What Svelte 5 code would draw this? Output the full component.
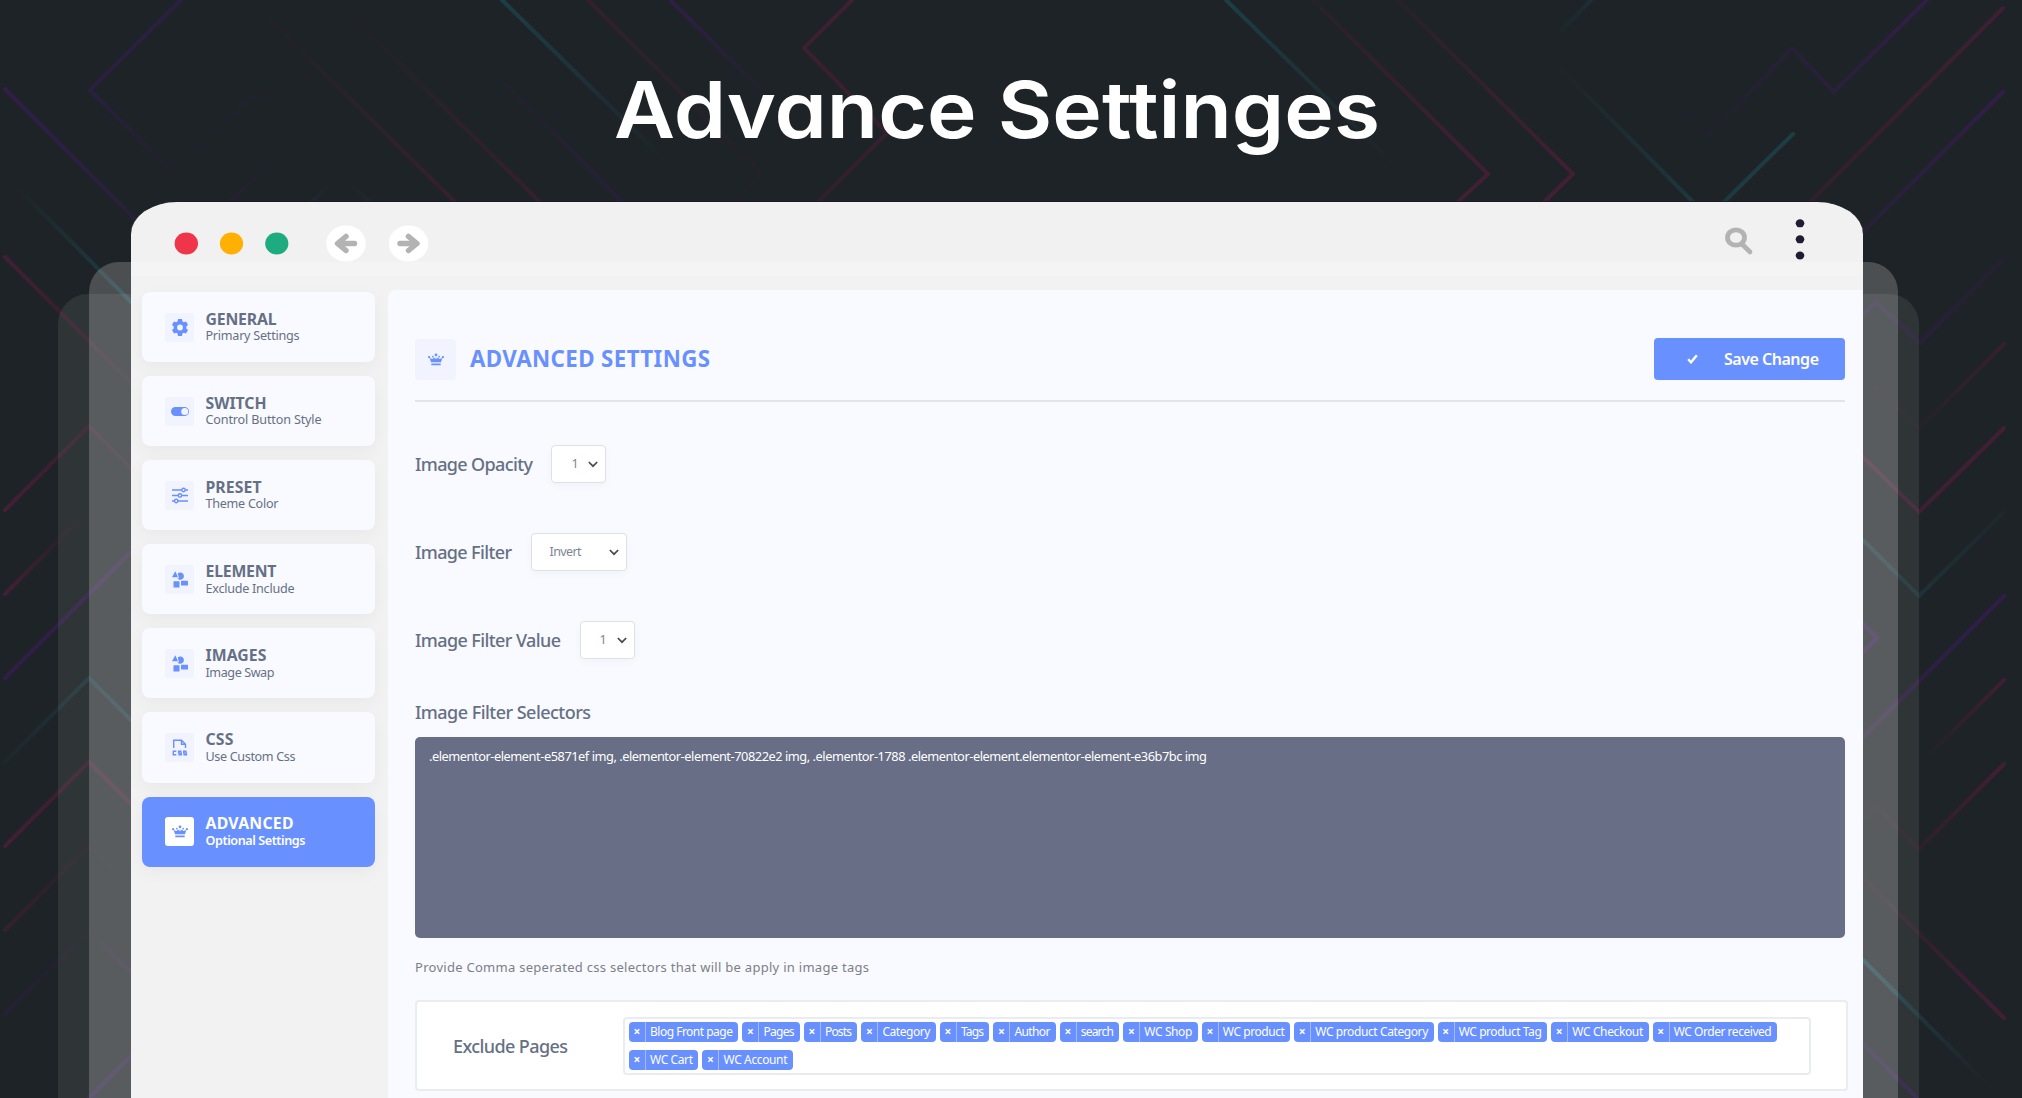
<script>
  const cards = [
    { title: 'GENERAL', sub: 'Primary Settings', icon: 'gear', tw: 71, sw: 94 },
    { title: 'SWITCH', sub: 'Control Button Style', icon: 'toggle', tw: 61, sw: 116 },
    { title: 'PRESET', sub: 'Theme Color', icon: 'sliders', tw: 56, sw: 73 },
    { title: 'ELEMENT', sub: 'Exclude Include', icon: 'shapes', tw: 71, sw: 89 },
    { title: 'IMAGES', sub: 'Image Swap', icon: 'shapes', tw: 61, sw: 69 },
    { title: 'CSS', sub: 'Use Custom Css', icon: 'css', tw: 28, sw: 90 },
    { title: 'ADVANCED', sub: 'Optional Settings', icon: 'crown', tw: 88, sw: 100, active: true }
  ];

  const fields = [
    { label: 'Image Opacity', lw: 118, value: '1', vw: 5, w: 55, pad: 19 },
    { label: 'Image Filter', lw: 97, value: 'Invert', vw: 32, w: 96, pad: 18 },
    { label: 'Image Filter Value', lw: 146, value: '1', vw: 5, w: 55, pad: 19 }
  ];

  const tags = [
    ['Blog Front page', 83], ['Pages', 31], ['Posts', 27], ['Category', 48], ['Tags', 23],
    ['Author', 36], ['search', 33], ['WC Shop', 48], ['WC product', 62],
    ['WC product Category', 113], ['WC product Tag', 83], ['WC Checkout', 71],
    ['WC Order received', 98], ['WC Cart', 43], ['WC Account', 64]
  ];

  const P = '#421a66', T = '#1a5f6b', R = '#6d1a45';
  // [colour, points, start opacity, end opacity]
  const lines = [
    [P, '181,0 90,90 173,173 258,90 280,112', 0.5, 0],
    [P, '5,89 140,224', 0.7, 0.35],
    [T, '15,185 131,302', 0, 0.6],
    [R, '5,257 131,383', 0.6, 0.15],
    [R, '250,0 455,202', 0, 0.4],
    [R, '335,0 540,202', 0, 0.4],
    [P, '230,202 280,155', 0.25, 0],
    [T, '312,202 332,182', 0.15, 0],
    [T, '348,182 370,202', 0, 0.15],
    [T, '502,0 672,167', 0.6, 0],
    [R, '588,0 762,173 735,202', 0.35, 0.05],
    [P, '460,38 622,202', 0, 0.35],
    [P, '670,0 780,108', 0.65, 0],
    [R, '852,0 804,48 887,133 818,202', 0.55, 0.3],
    [T, '1226,0 1400,170', 0.6, 0],
    [R, '1313,0 1488,174 1458,202', 0.15, 0.6],
    [R, '1398,0 1573,174 1544,202', 0.15, 0.6],
    [T, '1591,0 1552,40', 0.25, 0],
    [T, '1552,60 1693,202', 0, 0.45],
    [T, '1793,134 1724,202', 0.6, 0.5],
    [P, '1927,0 1834,92 1792,48 1709,135 1650,75', 0.7, 0],
    [R, '2003,8 1810,202', 0.55, 0.3],
    [P, '2003,92 1863,232', 0.7, 0.35],
    [P, '2003,260 1920,343 1876,302 1863,315', 0.25, 0.4],
    [R, '2004,344 1919,429 1877,387 1863,400', 0.4, 0],
    [R, '2004,428 1919,512 1863,457', 0.6, 0.5],
    [T, '2004,512 1919,596 1863,540', 0.1, 0.45],
    [P, '1863,624 1877,638 1863,652', 0.7, 0.7],
    [P, '2004,596 1863,737', 0.7, 0.5],
    [R, '2004,680 1919,765', 0.55, 0],
    [R, '2004,764 1919,849 1877,807 1863,820', 0.6, 0.05],
    [R, '1863,878 2004,1018', 0.1, 0.65],
    [T, '1863,960 1990,1087', 0.7, 0],
    [P, '1863,1044 1917,1098', 0.4, 0.6],
    [R, '5,510 89,426 131,468', 0.65, 0.2],
    [R, '5,594 86,513', 0.6, 0],
    [P, '5,678 131,552', 0.7, 0.6],
    [T, '5,762 89,678 131,720', 0.1, 0.45],
    [R, '5,846 89,762 131,804', 0.6, 0.4],
    [R, '5,930 89,846 131,888', 0.4, 0],
    [P, '5,1014 89,931', 0.3, 0.05],
    [P, '89,931 131,972', 0, 0.4],
    [P, '89,1098 131,1056', 0.6, 0.5]
  ].map(([color, pts, a, b]) => {
    const list = pts.split(' ').map((p) => p.split(',').map(Number));
    const [x1, y1] = list[0];
    const [x2, y2] = list[list.length - 1];
    return { color, pts, a, b, x1, y1, x2, y2 };
  });

  // Tracks a label so that its text spans the given width.
  function fit(node, width) {
    const n = node.textContent.length;
    if (n < 2) return;
    const gap = (width - node.getBoundingClientRect().width) / (n - 1);
    node.style.letterSpacing = gap + 'px';
    node.style.marginRight = -gap + 'px';
  }

  // Widens the heading's letters to the given width.
  function stretch(node, width) {
    node.style.transform = `scaleX(${width / node.getBoundingClientRect().width})`;
  }
</script>

{#snippet icon(name)}
  {#if name === 'gear'}
    <svg class="ico" viewBox="0 0 16 17">
      <path fill-rule="evenodd" d="M6 0h4l.5 2.4 1.3.8L14 2.4l2 3.4-1.7 1.6v2L16 11l-2 3.5-2.3-.8-1.3.8L10 17H6l-.5-2.5-1.3-.8-2.2.8L0 11l1.7-1.6v-2L0 5.800l2-3.400 2.200.8 1.300-.8zM8 5.600a2.900 2.900 0 1 0 0 5.800 2.900 2.900 0 0 0 0-5.800z" />
    </svg>
  {:else if name === 'toggle'}
    <svg class="ico wide" viewBox="0 0 18 9">
      <path fill-rule="evenodd" d="M4.500 0h9a4.500 4.500 0 0 1 0 9h-9a4.500 4.500 0 0 1 0-9zm9.200 1a3.500 3.500 0 1 0 0 7 3.500 3.500 0 0 0 0-7z" />
    </svg>
  {:else if name === 'sliders'}
    <svg class="ico stroke" viewBox="0 0 16 16">
      <path d="M0 2.500h9.700M13.300 2.500H16M0 8h6.200M9.800 8H16M0 13.500h2.400M6 13.500h10" />
      <circle cx="11.500" cy="2.500" r="1.700" /><circle cx="8" cy="8" r="1.700" /><circle cx="4.200" cy="13.500" r="1.700" />
    </svg>
  {:else if name === 'shapes'}
    <svg class="ico" viewBox="0 0 16 17">
      <path d="M3.300.3 6 6.300H0z" />
      <path d="M5.700 2.400A3.700 3.700 0 1 1 5.200 7.300H7z" />
      <rect x="1.500" y="10.300" width="6" height="6.200" rx=".5" />
      <rect x="9" y="9.800" width="7" height="4.600" rx=".5" />
    </svg>
  {:else if name === 'css'}
    <svg class="ico stroke" viewBox="0 0 16 17">
      <path d="M1.700 9V1.200h7.800L13.500 5.200V9M9.500 1.200v4h4" />
      <path d="M4.300 12.300H1.300v3.400h3M9.500 12.300H6.600V14h2.700v1.700H6.300M14.600 12.300h-2.900V14h2.700v1.700h-3" />
    </svg>
  {:else if name === 'crown'}
    <svg class="ico" viewBox="0 0 17 13">
      <path d="M3.200 9.500 1.800 4.800 4.500 6l1-.6L6.300 4 8 6.300l.5-3.300.5 3.300L10.700 4l.8 1.400 1 .6 2.700-1.200L13.800 9.500zM3.500 10.800h10v1.700h-10z" />
      <circle cx="1.200" cy="4" r="1.200" /><circle cx="8.500" cy="1.500" r="1.500" /><circle cx="15.800" cy="4" r="1.200" /><circle cx="5.100" cy="3.400" r=".9" /><circle cx="11.900" cy="3.400" r=".9" />
    </svg>
  {/if}
{/snippet}

<div class="page">
  <svg class="pattern" viewBox="0 0 2022 1098">
    <defs>
      {#each lines as l, i}
        <linearGradient id="g{i}" gradientUnits="userSpaceOnUse" x1={l.x1} y1={l.y1} x2={l.x2} y2={l.y2}>
          <stop offset="0" stop-color={l.color} stop-opacity={l.a} />
          <stop offset="1" stop-color={l.color} stop-opacity={l.b} />
        </linearGradient>
      {/each}
    </defs>
    {#each lines as l, i}
      <polyline points={l.pts} stroke="url(#g{i})" />
    {/each}
  </svg>

  <div class="sheet far"></div>
  <div class="sheet near"></div>

  <h1><span use:stretch={766}>Advance Settinges</span></h1>

  <div class="window">
    <div class="bar">
      <svg class="lights" width="300" height="60" viewBox="0 0 300 60">
        <ellipse cx="55.300" cy="41.500" rx="11.700" ry="11" fill="#ee3549" />
        <ellipse cx="100.500" cy="41.500" rx="11.600" ry="11" fill="#ffb002" />
        <ellipse cx="145.800" cy="41.500" rx="11.600" ry="11" fill="#1fab80" />
        <ellipse cx="215" cy="41.500" rx="19.800" ry="18" fill="#fff" />
        <ellipse cx="277.500" cy="41.500" rx="19.800" ry="18" fill="#fff" />
        <path d="M215 34.500 206.500 41.500l8.500 7M207.500 41.500h16" />
        <path d="M277.500 34.500 286 41.500l-8.500 7M285 41.500h-16" />
      </svg>
      <svg class="tools" width="160" height="60" viewBox="0 0 160 60">
        <ellipse cx="33" cy="35.500" rx="8.500" ry="7.700" fill="none" stroke="#b3b3b3" stroke-width="4.800" />
        <path d="M39.500 42.500 47 50" stroke="#b3b3b3" stroke-width="4.600" stroke-linecap="round" />
        <ellipse cx="97" cy="21.300" rx="4.300" ry="4" /><ellipse cx="97" cy="37.300" rx="4.300" ry="4" /><ellipse cx="97" cy="53.500" rx="4.300" ry="4" />
      </svg>
    </div>

    <div class="body">
      <nav>
        {#each cards as c}
          <div class="card" class:active={c.active}>
            <div class="badge">{@render icon(c.icon)}</div>
            <div class="text">
              <div class="t"><span use:fit={c.tw}>{c.title}</span></div>
              <div class="s"><span use:fit={c.sw}>{c.sub}</span></div>
            </div>
          </div>
        {/each}
      </nav>

      <main>
        <header>
          <div class="badge big">{@render icon('crown')}</div>
          <h2><span use:fit={240}>ADVANCED SETTINGS</span></h2>
          <button>
            <svg width="11" height="10" viewBox="0 0 11 10"><path d="M1.200 5.200 4 8.300 9.800 1.200" /></svg>
            <span use:fit={95}>Save Change</span>
          </button>
        </header>

        {#each fields as f}
          <div class="field">
            <span class="label" use:fit={f.lw}>{f.label}</span>
            <div class="select" style="width: {f.w}px; padding-left: {f.pad}px">
              <span use:fit={f.vw}>{f.value}</span>
              <svg width="10" height="7" viewBox="0 0 10 7"><path d="M.8 1 5 5.200 9.200 1" /></svg>
            </div>
          </div>
        {/each}

        <div class="selectors"><span class="label" use:fit={176}>Image Filter Selectors</span></div>
        <div class="area"><span use:fit={778}>.elementor-element-e5871ef img, .elementor-element-70822e2 img, .elementor-1788 .elementor-element.elementor-element-e36b7bc img</span></div>
        <p><span use:fit={454}>Provide Comma seperated css selectors that will be apply in image tags</span></p>

        <section>
          <span class="label" use:fit={115}>Exclude Pages</span>
          <div class="tags">
            {#each tags as [name, w]}
              <div class="tag"><b>×</b><i><span use:fit={w}>{name}</span></i></div>
            {/each}
          </div>
        </section>
      </main>
    </div>
  </div>
</div>

<style>
  :global(body) { margin: 0; overflow: hidden; }
  .page {
    position: relative;
    width: 2022px;
    height: 1098px;
    overflow: hidden;
    background: #1e2327;
    font-family: 'Noto Sans', 'Open Sans', sans-serif;
    color: #667085;
  }
  .page * { box-sizing: border-box; }
  span { display: inline-block; white-space: pre; }
  .pattern { position: absolute; inset: 0; width: 2022px; height: 1098px; opacity: 0.75; }
  .pattern polyline { fill: none; stroke-width: 4; stroke-linecap: round; }
  .sheet { position: absolute; bottom: 0; }
  .far { left: 58px; width: 1861px; top: 294px; border-radius: 30px 30px 0 0; background: rgba(255, 255, 255, 0.08); }
  .near { left: 89px; width: 1809px; top: 262px; border-radius: 30px 30px 0 0; background: rgba(255, 255, 255, 0.2); }

  h1 {
    position: relative;
    margin: 0;
    height: 201px;
    padding: 61px 0 0 614px;
    font: 600 78px/97px Inter, sans-serif;
    font-feature-settings: 'cv11';
    color: #fff;
  }
  h1 span { transform-origin: 0 50%; }
  .window {
    position: relative;
    width: 1732px;
    height: 897px;
    margin-left: 131px;
    border-radius: 46px 46px 0 0 / 33px 33px 0 0;
    background: linear-gradient(#f1f1f1 60px, #f4f4f4 60px, #f4f4f4 74px, #f2f2f2 74px);
    border-top: 1px solid #1e1a28;
    overflow: hidden;
  }
  .bar { height: 60px; display: flex; justify-content: space-between; }
  .lights path { fill: none; stroke: #b3b3b3; stroke-width: 5.500; stroke-linecap: round; stroke-linejoin: round; }
  .tools { fill: #211c30; }

  .body { display: flex; height: 836px; padding: 28px 0 0 11px; }
  nav { flex: none; width: 233px; padding-top: 2px; display: flex; flex-direction: column; gap: 14px; margin-right: 12.500px; }
  .card {
    flex: none;
    display: flex;
    align-items: center;
    height: 70.100px;
    padding-left: 23px;
    border-radius: 8px;
    background: #f9faff;
    box-shadow: 0 5px 18px rgba(0, 0, 0, 0.045);
  }
  .badge {
    width: 29px;
    height: 29px;
    display: grid;
    place-items: center;
    border-radius: 3px;
    background: #f1f3ff;
    fill: #6990ff;
  }
  .ico { width: 16px; height: 17px; display: block; }
  .wide { width: 18px; height: 9px; }
  .stroke { fill: none; stroke: #6990ff; stroke-width: 1.400; }
  .text { margin-left: 11.500px; }
  .t { font-size: 15.800px; line-height: 18px; height: 18px; font-weight: 700; }
  .s { font-size: 12.600px; line-height: 17px; height: 17px; }
  .t, .s { margin-top: -0.300px; }
  .active { background: #6990ff; color: #fff; }
  .active .badge { background: #fff; }
  .active .s { font-weight: 600; }

  main {
    flex: 1;
    min-width: 0;
    padding: 48px 18px 0 27.500px;
    border-radius: 8px 0 0 0;
    background: #f9faff;
  }
  header { display: flex; align-items: center; width: 1430px; height: 64px; padding-bottom: 20px; border-bottom: 2px solid #e2e4e8; }
  .big { width: 41px; height: 41px; border-radius: 4px; }
  .big .ico, .active .ico { height: 13px; }
  h2 { margin: 0 auto 0 14px; font-size: 22.300px; line-height: 30px; font-weight: 700; color: #6990ff; }
  button {
    display: flex;
    align-items: center;
    justify-content: space-between;
    width: 191px;
    height: 42px;
    padding: 0 26px 0 33px;
    border: 0;
    border-radius: 4px;
    background: #6990ff;
    color: #fff;
    font: 600 16px/24px 'Noto Sans', sans-serif;
  }
  button path { fill: none; stroke: #fff; stroke-width: 2.400; }
  .label { font-size: 18px; line-height: 26px; font-weight: 500; }
  .field { display: flex; align-items: center; gap: 18.500px; height: 38px; margin-top: 50.200px; }
  header + .field { margin-top: 43px; }
  .select {
    display: flex;
    align-items: center;
    justify-content: space-between;
    height: 38px;
    padding-right: 7px;
    border: 1px solid #dfe1e6;
    border-radius: 4px;
    background: #fff;
    font-size: 12.500px;
    line-height: 18px;
    color: #7d8595;
    box-shadow: 0 3px 8px rgba(0, 0, 0, 0.03);
  }
  .select path { fill: none; stroke: #4a4a4a; stroke-width: 1.700; }
  .selectors { margin-top: 39.500px; height: 26px; }
  .area {
    width: 1430px;
    height: 201px;
    margin-top: 12.500px;
    padding: 10px 14px;
    border-radius: 5px;
    background: #676e86;
    color: #fff;
    font-size: 12.800px;
    line-height: 18px;
  }
  p { margin: 20px 0 0; height: 18px; font-size: 13px; line-height: 18px; color: #7b7f88; }
  section {
    display: flex;
    align-items: center;
    width: 1433px;
    height: 91px;
    margin-top: 24px;
    padding-left: 36px;
    border: 2px solid #ebecef;
    border-radius: 4px;
    background: #fff;
  }
  .tags {
    display: flex;
    flex-wrap: wrap;
    align-content: flex-start;
    gap: 8px 4.200px;
    width: 1188px;
    height: 58px;
    margin-left: 55px;
    padding: 3px 4px;
    border: 2px solid #ebecef;
    border-radius: 4px;
  }
  .tag {
    display: flex;
    height: 20px;
    border-radius: 4px;
    background: #6990ff;
    color: #fff;
    font-size: 12px;
    line-height: 20px;
  }
  .tag b { width: 17px; text-align: center; border-right: 1px solid #a9b9ec; }
  .tag i { font-style: normal; padding: 0 5.300px 0 4px; }
</style>
